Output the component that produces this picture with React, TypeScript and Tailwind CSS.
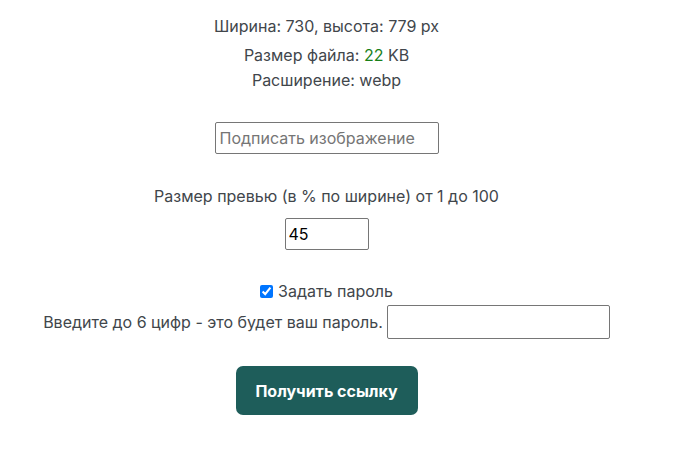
import React, { useState } from 'react';

export default function App() {
  const [caption, setCaption] = useState('');
  const [size, setSize] = useState('45');
  const [usePass, setUsePass] = useState(true);
  const [pass, setPass] = useState('');

  return (
    <div className="min-h-screen bg-white font-['Inter',sans-serif] text-[16px] text-[#41464b]">
      <div className="w-[653px] flex flex-col items-center">
        <p className="mt-[14px] leading-[24px]">Ширина: 730, высота: 779 px</p>
        <p className="mt-[5px] leading-[24px]">
          Размер файла: <span className="text-[#198019]">22</span> KB
        </p>
        <p className="mt-[1px] leading-[24px]">Расширение: webp</p>

        <input
          type="text"
          value={caption}
          onChange={(e) => setCaption(e.target.value)}
          placeholder="Подписать изображение"
          className="mt-[30px] w-[224px] h-[32px] px-[4px] border border-[#767676] rounded-[2px] text-[16px] text-black placeholder:text-[#757575] outline-none"
        />

        <p className="mt-[30px] leading-[24px]">Размер превью (в % по ширине) от 1 до 100</p>
        <input
          type="text"
          value={size}
          onChange={(e) => setSize(e.target.value)}
          className="mt-[10px] w-[84px] h-[32px] px-[3px] border border-[#767676] rounded-[2px] text-[16px] text-black outline-none"
        />

        <label className="mt-[29px] flex items-center gap-[5px] leading-[24px]">
          <input
            type="checkbox"
            checked={usePass}
            onChange={(e) => setUsePass(e.target.checked)}
            className="w-[13px] h-[13px] accent-[#0075ff]"
          />
          Задать пароль
        </label>
        <div className="mt-[2px] flex items-center gap-[4px]">
          <span>Введите до 6 цифр - это будет ваш пароль.</span>
          <input
            type="text"
            value={pass}
            onChange={(e) => setPass(e.target.value)}
            className="w-[223px] h-[34px] px-[4px] border border-[#767676] rounded-[2px] text-[16px] text-black outline-none"
          />
        </div>

        <button className="mt-[27px] w-[182px] h-[49px] rounded-[7px] bg-[#1e5d5a] text-white font-bold text-[16px]">
          Получить ссылку
        </button>
      </div>
    </div>
  );
}
